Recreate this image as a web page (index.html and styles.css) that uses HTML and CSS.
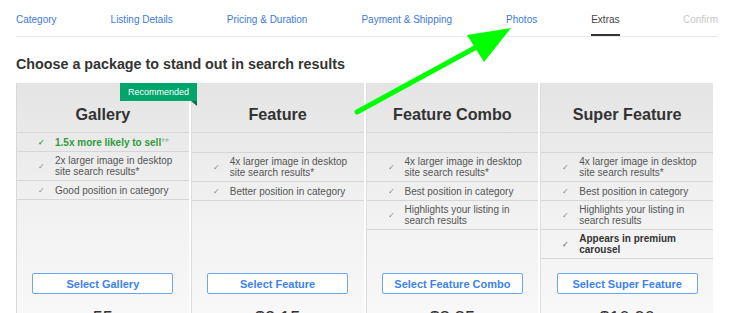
FILE: index.html
```html
<!DOCTYPE html>
<html lang="en">
<head>
    <meta charset="UTF-8">
    <meta name="viewport" content="width=device-width, initial-scale=1.0">
    <title>Sell your item - Extras</title>
    <link rel="stylesheet" href="styles.css">
</head>
<body>
    <div class="page">
        <nav class="steps">
            <a class="step">Category</a>
            <a class="step">Listing Details</a>
            <a class="step">Pricing &amp; Duration</a>
            <a class="step">Payment &amp; Shipping</a>
            <a class="step">Photos</a>
            <a class="step active">Extras</a>
            <a class="step disabled">Confirm</a>
        </nav>

        <h2 class="title">Choose a package to stand out in search results</h2>

        <div class="packages">
            <div class="package">
                <div class="package-head">
                    <span class="badge">Recommended</span>
                    <h3>Gallery</h3>
                </div>
                <ul class="features">
                    <li class="highlight"><span class="tick">&#10003;</span><span>1.5x more likely to sell<em>**</em></span></li>
                    <li><span class="tick">&#10003;</span><span>2x larger image in desktop site search results*</span></li>
                    <li><span class="tick">&#10003;</span><span>Good position in category</span></li>
                </ul>
                <button class="select">Select Gallery</button>
                <div class="price">55</div>
            </div>

            <div class="package">
                <div class="package-head">
                    <h3>Feature</h3>
                </div>
                <ul class="features">
                    <li class="empty"></li>
                    <li><span class="tick">&#10003;</span><span>4x larger image in desktop site search results*</span></li>
                    <li><span class="tick">&#10003;</span><span>Better position in category</span></li>
                </ul>
                <button class="select">Select Feature</button>
                <div class="price">$2.15</div>
            </div>

            <div class="package">
                <div class="package-head">
                    <h3>Feature Combo</h3>
                </div>
                <ul class="features">
                    <li class="empty"></li>
                    <li><span class="tick">&#10003;</span><span>4x larger image in desktop site search results*</span></li>
                    <li><span class="tick">&#10003;</span><span>Best position in category</span></li>
                    <li><span class="tick">&#10003;</span><span>Highlights your listing in search results</span></li>
                </ul>
                <button class="select">Select Feature Combo</button>
                <div class="price">$8.85</div>
            </div>

            <div class="package">
                <div class="package-head">
                    <h3>Super Feature</h3>
                </div>
                <ul class="features">
                    <li class="empty"></li>
                    <li><span class="tick">&#10003;</span><span>4x larger image in desktop site search results*</span></li>
                    <li><span class="tick">&#10003;</span><span>Best position in category</span></li>
                    <li><span class="tick">&#10003;</span><span>Highlights your listing in search results</span></li>
                    <li class="strong"><span class="tick">&#10003;</span><span>Appears in premium carousel</span></li>
                </ul>
                <button class="select">Select Super Feature</button>
                <div class="price">$10.90</div>
            </div>
        </div>
    </div>

    <!-- annotation arrow drawn over the page -->
    <svg class="arrow" width="740" height="313" viewBox="0 0 740 313">
        <line x1="357" y1="112" x2="482" y2="44" stroke="#00ff00" stroke-width="5" stroke-linecap="round"/>
        <polygon points="511,28 467,35 484,62" fill="#00ff00"/>
    </svg>
</body>
</html>
```

FILE: styles.css
```css
body { margin: 0; font-family: "Liberation Sans", Arial, sans-serif; color: #333; background: #fff; overflow: hidden; }
.page { padding: 0 22px 0 16px; }

.steps { display: flex; gap: 54px; border-bottom: 1px solid #e9e9e9; }
.step { font-size: 10px; line-height: 14px; padding: 13px 0 7px; border-bottom: 2px solid transparent; color: #4179d8; }
.step.active { color: #444; border-bottom-color: #333; }
.step.disabled { color: #c6c6c6; margin-left: auto; }

.title { font-size: 14.3px; line-height: 18px; margin: 18px 0 10px; color: #333; }

.packages { display: grid; grid-template-columns: repeat(4, 1fr); gap: 2px; width: 697px; }
.package { position: relative; background: linear-gradient(#e4e4e4, #f0f0f0 45%, #f9f9f9); border-left: 1px solid #dedede; display: flex; flex-direction: column; }
.package:first-child { border-left-color: #d8d8d8; }

.package-head { height: 49px; border-bottom: 1px solid #d6d6d6; }
.package-head h3 { margin: 0; padding-top: 21px; font-size: 16.2px; line-height: 20px; text-align: center; color: #333; }

.badge { position: absolute; top: 0; left: 103px; width: 77px; height: 18px; line-height: 18px; background: #00a56c; color: #fff; font-size: 9px; text-align: center; z-index: 1; }
.badge::after { content: ""; position: absolute; right: 0; bottom: -5px; border-top: 5px solid #00744a; border-left: 6px solid transparent; }

.features { list-style: none; margin: 0; padding: 0; height: 124px; }
.features li { display: flex; align-items: center; min-height: 19px; padding: 3px 10px 3px 0; box-sizing: border-box; border-bottom: 1px solid #d6d6d6; font-size: 10px; line-height: 11px; color: #555; }
.features li.empty { height: 20px; }
.tick { width: 17px; margin-left: 21px; font-size: 8px; color: #888; flex: none; }
.features li.highlight { color: #2f9b3b; font-weight: bold; }
.features li.highlight .tick { color: #4aa052; }
.features li.highlight em { font-style: normal; color: #8cc08f; font-weight: normal; }
.features li.strong { color: #333; font-weight: bold; }

.select { display: block; width: 141px; height: 21px; margin: 16px auto 0; padding: 0; background: #fff; border: 1px solid #69a6f5; border-radius: 2px; color: #3c82ee; font-family: inherit; font-size: 11px; font-weight: bold; }

.price { margin-top: 13px; text-align: center; font-size: 18px; line-height: 22px; color: #333; }

.arrow { position: absolute; top: 0; left: 0; pointer-events: none; }
```
